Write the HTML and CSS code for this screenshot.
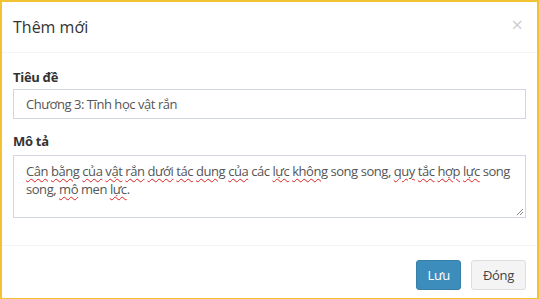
FILE: index.html
```html
<!DOCTYPE html>
<html lang="vi">
<head>
    <meta charset="UTF-8">
    <meta name="viewport" content="width=device-width, initial-scale=1.0">
    <title>Thêm mới</title>
    <link rel="stylesheet" href="styles.css">
</head>
<body>
    <div class="modal-frame">
        <div class="modal-header">
            <h4 class="modal-title">Thêm mới</h4>
            <span class="close-button">&times;</span>
        </div>

        <div class="modal-body">
            <div class="form-group">
                <label class="field-label">Tiêu đề</label>
                <div class="form-control input-box">Chương 3: Tĩnh học vật rắn</div>
            </div>
            <div class="form-group">
                <label class="field-label">Mô tả</label>
                <div class="form-control text-box">
                    <span class="typo">Cân</span> <span class="typo">bằng</span> <span class="typo">của</span> <span class="typo">vật</span> <span class="typo">rắn</span> <span class="typo">dưới</span> <span class="typo">tác</span> <span class="typo">dung</span> <span class="typo">của</span> các <span class="typo">lực</span> <span class="typo">không</span> song song, <span class="typo">quy</span> <span class="typo">tắc</span> <span class="typo">hợp</span> <span class="typo">lực</span> song song, <span class="typo">mô</span> men <span class="typo">lực</span>.
                    <svg class="resize-grip" width="7" height="7" viewBox="0 0 7 7">
                        <path d="M1 7 L7 1 M4 7 L7 4" stroke="#8a8a8a" stroke-width="1" fill="none"/>
                    </svg>
                </div>
            </div>
        </div>

        <div class="modal-footer">
            <button class="btn btn-primary">Lưu</button>
            <button class="btn btn-default">Đóng</button>
        </div>
    </div>
</body>
</html>
```

FILE: styles.css
```css
body {
    margin: 0;
    padding: 0;
    font-family: 'Open Sans', 'Noto Sans', sans-serif;
    color: #333;
    background-color: #fff;
}
.modal-frame {
    width: 539px;
    height: 299px;
    box-sizing: border-box;
    border: 2px solid #f1c232;
    border-bottom-width: 1px;
    background-color: #fff;
}
.modal-header {
    height: 51px;
    box-sizing: border-box;
    padding: 0 14px 0 11px;
    display: flex;
    align-items: center;
    justify-content: space-between;
    border-bottom: 1px solid #f4f4f4;
}
.modal-title {
    margin: 0;
    font-size: 16px;
    font-weight: 400;
    color: #333;
}
.close-button {
    font-size: 20px;
    line-height: 1;
    color: #000;
    opacity: 0.2;
    margin-top: -4px;
}
.modal-body {
    padding: 15px 11px 27px 11px;
}
.form-group + .form-group {
    margin-top: 13px;
}
.field-label {
    display: block;
    font-size: 13px;
    font-weight: 700;
    line-height: 18px;
    margin-bottom: 3px;
    letter-spacing: -0.3px;
}
.form-control {
    box-sizing: border-box;
    width: 100%;
    border: 1px solid #d2d6de;
    font-size: 13px;
    letter-spacing: -0.45px;
    color: #555;
    padding: 0 12px;
}
.input-box {
    height: 30px;
    line-height: 28px;
}
.text-box {
    position: relative;
    height: 63px;
    padding-top: 6px;
    line-height: 18px;
    margin-top: 5px;
}
.typo {
    text-decoration: underline wavy #e02020;
    text-decoration-thickness: 1px;
    text-underline-offset: 2px;
}
.resize-grip {
    position: absolute;
    right: 2px;
    bottom: 2px;
}
.modal-footer {
    border-top: 1px solid #f4f4f4;
    padding: 14px 11px 0 11px;
    display: flex;
    justify-content: flex-end;
    gap: 10px;
}
.btn {
    height: 30px;
    padding: 0 11px;
    font-family: inherit;
    font-size: 13px;
    letter-spacing: -0.3px;
    border-radius: 3px;
    border: 1px solid transparent;
}
.btn-primary {
    background-color: #3c8dbc;
    border-color: #367fa9;
    color: #fff;
    padding: 0 10px;
}
.btn-default {
    background-color: #f4f4f4;
    border-color: #ddd;
    color: #444;
}
```
